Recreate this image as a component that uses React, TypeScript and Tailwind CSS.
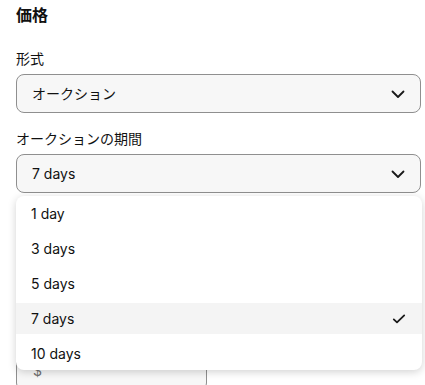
import React from "react";

const Chevron = () => (
  <svg width="16" height="16" viewBox="0 0 16 16" fill="none" className="text-[#191919]">
    <path d="M2.5 5.5 L8 11 L13.5 5.5" stroke="currentColor" strokeWidth="1.8" strokeLinecap="round" strokeLinejoin="round" />
  </svg>
);

const Check = () => (
  <svg width="14" height="14" viewBox="0 0 14 14" fill="none" className="text-[#191919]">
    <path d="M1.8 7.4 L5 10.4 L12.2 3.4" stroke="currentColor" strokeWidth="1.8" strokeLinecap="round" strokeLinejoin="round" />
  </svg>
);

const options = ["1 day", "3 days", "5 days", "7 days", "10 days"];

export default function App() {
  return (
    <div
      className="relative w-[425px] h-[385px] overflow-hidden bg-white text-[#111111]"
      style={{ fontFamily: "Inter, 'Noto Sans CJK JP', sans-serif" }}
    >
      <div className="pl-4 pr-1 pt-[5px]">
        <h2 className="text-[16px] leading-[20px] font-bold">価格</h2>

        <div className="mt-[25px] text-[14px] leading-[18px]">形式</div>
        <div className="mt-[6px] h-[39px] flex items-center justify-between rounded-[8px] border border-[#8f8f8f] bg-[#f7f7f7] pl-[15px] pr-[14px]">
          <span className="text-[14px]">オークション</span>
          <Chevron />
        </div>

        <div className="mt-[17px] text-[14px] leading-[18px]">オークションの期間</div>
        <div className="mt-[6px] h-[39px] flex items-center justify-between rounded-[8px] border border-[#8f8f8f] bg-[#f7f7f7] pl-[15px] pr-[14px]">
          <span className="text-[14px]">7 days</span>
          <Chevron />
        </div>

        <div className="mt-[158px] w-[191px] h-[40px] flex items-center rounded-[8px] border border-[#8f8f8f] bg-[#f7f7f7] pl-[16px]">
          <span className="text-[14px] leading-[18px] text-[#707070]">$</span>
        </div>
      </div>

      <div className="absolute left-4 top-[196px] w-[406px] rounded-[8px] bg-white pt-[2px] pb-[1px] flex flex-col gap-1 shadow-[0_2px_8px_rgba(0,0,0,0.18)]">
        {options.map((o) => {
          const sel = o === "7 days";
          return (
            <div
              key={o}
              className={`h-[31px] flex items-center justify-between pl-[15px] pr-[16px] text-[14px] ${sel ? "bg-[#f4f4f4]" : ""}`}
            >
              <span>{o}</span>
              {sel && <Check />}
            </div>
          );
        })}
      </div>
    </div>
  );
}
